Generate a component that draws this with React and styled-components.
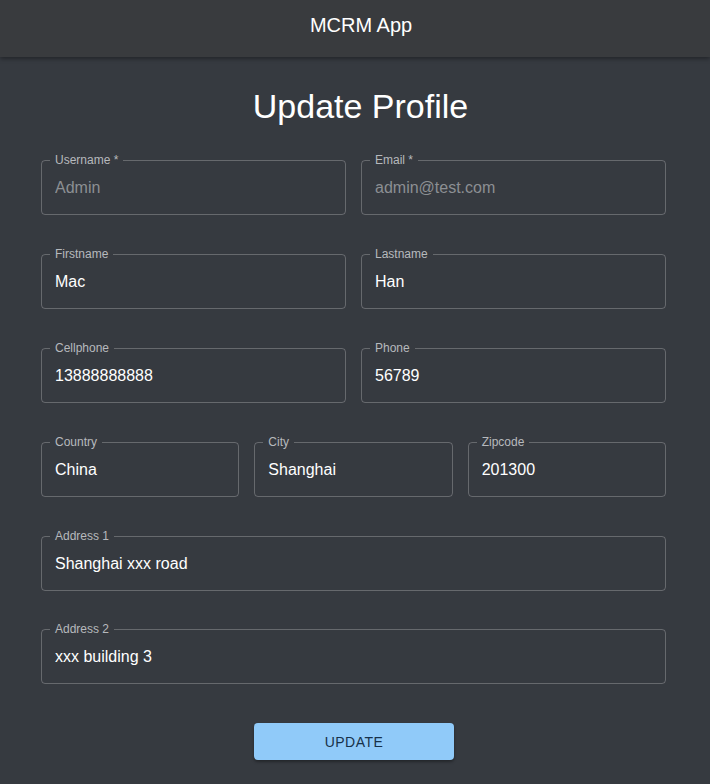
import React from "react";
import styled, { createGlobalStyle } from "styled-components";

const GlobalStyle = createGlobalStyle`
  html, body {
    margin: 0;
    padding: 0;
    background-color: #363a40;
    font-family: "Liberation Sans", Arial, sans-serif;
  }
`;

const Page = styled.div`
  min-height: 784px;
  background-color: #363a40;
`;

const Header = styled.header`
  height: 57px;
  display: flex;
  align-items: center;
  justify-content: center;
  background-color: #393b3e;
  box-shadow: 0 2px 4px rgba(0, 0, 0, 0.35);
  color: #ffffff;
  font-size: 20px;
  padding: 0 0 6px 12px;
  box-sizing: border-box;
`;

const Main = styled.main`
  width: 625px;
  margin-left: 41px;
  padding-top: 29px;
  display: flex;
  flex-direction: column;
`;

const Title = styled.h1`
  margin: 0 0 33px 0;
  padding-left: 14px;
  text-align: center;
  font-weight: 400;
  font-size: 34px;
  color: #ffffff;
  line-height: 40px;
`;

const Row = styled.div`
  display: grid;
  grid-template-columns: repeat(${(p) => p.cols}, 1fr);
  column-gap: 15px;
  margin-bottom: ${(p) => p.gap || 38}px;
`;

const Field = styled.div`
  position: relative;
  height: 56px;
`;

const Outline = styled.fieldset`
  position: absolute;
  inset: -5px 0 0 0;
  margin: 0;
  padding: 0 8px;
  border: 1px solid rgba(255, 255, 255, 0.24);
  border-radius: 4px;
  pointer-events: none;
`;

const Legend = styled.legend`
  padding: 0 5px;
  font-size: 12px;
  line-height: 12px;
  color: #b6b9bd;
  font-family: "Liberation Sans", Arial, sans-serif;
`;

const Input = styled.input`
  box-sizing: border-box;
  width: 100%;
  height: 55px;
  padding: 2px 14px 0;
  background: transparent;
  border: none;
  outline: none;
  font-family: "Liberation Sans", Arial, sans-serif;
  font-size: 16px;
  color: ${(p) => (p.disabled ? "#8c8f93" : "#ffffff")};
  -webkit-text-fill-color: ${(p) => (p.disabled ? "#8c8f93" : "#ffffff")};
`;

const ButtonWrap = styled.div`
  display: flex;
  justify-content: center;
  padding-left: 1px;
`;

const UpdateButton = styled.button`
  width: 200px;
  height: 37px;
  border: none;
  border-radius: 4px;
  background-color: #90caf9;
  color: #17314a;
  font-family: "Liberation Sans", Arial, sans-serif;
  font-size: 14px;
  letter-spacing: 0.5px;
  box-shadow: 0 2px 3px rgba(0, 0, 0, 0.35);
  cursor: pointer;
`;

function TextField({ label, value, disabled }) {
  return (
    <Field>
      <Outline>
        <Legend>{label}</Legend>
      </Outline>
      <Input defaultValue={value} disabled={disabled} />
    </Field>
  );
}

export default function App() {
  return (
    <Page>
      <GlobalStyle />
      <Header>MCRM App</Header>
      <Main>
        <Title>Update Profile</Title>
        <Row cols={2}>
          <TextField label="Username *" value="Admin" disabled />
          <TextField label="Email *" value="admin@test.com" disabled />
        </Row>
        <Row cols={2}>
          <TextField label="Firstname" value="Mac" />
          <TextField label="Lastname" value="Han" />
        </Row>
        <Row cols={2}>
          <TextField label="Cellphone" value="13888888888" />
          <TextField label="Phone" value="56789" />
        </Row>
        <Row cols={3}>
          <TextField label="Country" value="China" />
          <TextField label="City" value="Shanghai" />
          <TextField label="Zipcode" value="201300" />
        </Row>
        <Row cols={1} gap={37}>
          <TextField label="Address 1" value="Shanghai xxx road" />
        </Row>
        <Row cols={1} gap={39}>
          <TextField label="Address 2" value="xxx building 3" />
        </Row>
        <ButtonWrap>
          <UpdateButton>UPDATE</UpdateButton>
        </ButtonWrap>
      </Main>
    </Page>
  );
}
